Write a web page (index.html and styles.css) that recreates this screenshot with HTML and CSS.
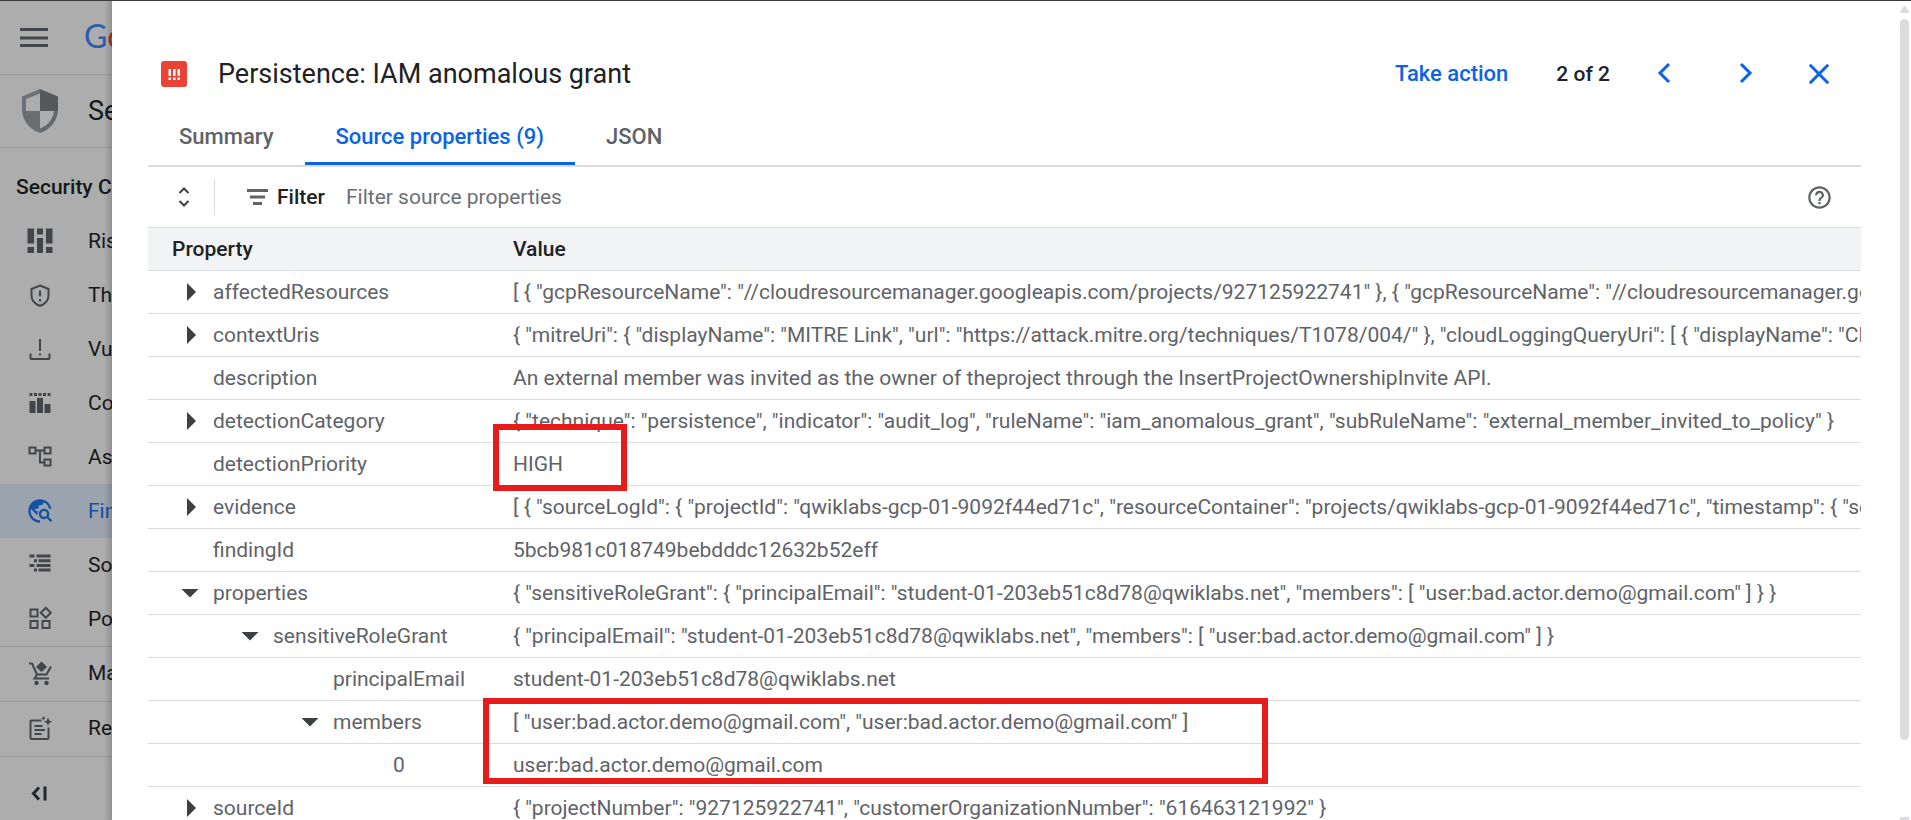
FILE: index.html
```html
<!DOCTYPE html>
<html lang="en">
<head>
<meta charset="utf-8">
<title>Security Command Center</title>
<link rel="stylesheet" href="styles.css">
</head>
<body>
<div class="app">
  <div class="page">
    <header class="topbar">
      <svg class="menu" viewBox="0 0 28 20"><path d="M0 1.500h28M0 10h28M0 17.500h28" stroke-width="3"/></svg>
      <span class="logo"><span class="logo-blue">G</span><span class="logo-red">o</span></span>
    </header>
    <div class="product">
      <svg class="shield" viewBox="0 0 36 44"><path d="M18 0 0 7.500V22h18z" fill="#6c7276"/><path d="M18 0v22h18V7.500z" fill="#54585b"/><path d="M0 22c1 10 8 19 18 22V22z" fill="#686e72"/><path d="M18 22v22c10-3 17-12 18-22z" fill="#65696c"/><path d="M4 10 18 4.500V22H4z" fill="#adadad"/><path d="M18 22v17.500c8-3 13-9.500 14-17.500z" fill="#adadad"/></svg>
      <span class="product-name">Security</span>
    </div>
    <nav class="nav">
      <p class="nav-title">Security Command Center</p>
      <a class="nav-item" href="#risk"><svg viewBox="0 0 28 28"><path d="M1.500 1.500h6.500v15H1.500zM1.500 20h6.500v6H1.500zM11 1.500h6v6h-6zM11 11h6v15h-6zM20 1.500h6.500v15H20zM20 20h6.500v6H20z"/></svg><span>Risk</span></a>
      <a class="nav-item" href="#threats"><svg viewBox="0 0 28 28" class="line"><path d="M14 4.500 22.500 8v6.500c0 5-3.500 8.500-8.500 10.500-5-2-8.500-5.500-8.500-10.500V8z"/><path d="M14 9.500v6M14 18v2.500"/></svg><span>Threats</span></a>
      <a class="nav-item" href="#vulnerabilities"><svg viewBox="0 0 28 28" class="line"><path d="M14 4v12M14 18.500v2M4.500 18.500V23q0 1 1 1h17q1 0 1-1v-4.500"/></svg><span>Vulnerabilities</span></a>
      <a class="nav-item" href="#compliance"><svg viewBox="0 0 28 28"><path d="M3.500 4h3v3h-3zM8 4h3v3H8zM12.500 4h3v3h-3zM17 4h3v3h-3zM21.500 4h3v3h-3zM3.500 12h6v12h-6zM11 9h6v15h-6zM18.500 15h6v9h-6z"/></svg><span>Compliance</span></a>
      <a class="nav-item" href="#assets"><svg viewBox="0 0 28 28" class="line"><path d="M3.500 4.500h6v6h-6zM18.500 4.500h6v6h-6zM18.500 16.500h6v6h-6zM10 7.500h8M14 7.500v12h4"/></svg><span>Assets</span></a>
      <a class="nav-item active" href="#findings"><svg viewBox="0 0 24 24"><path d="M19.300 16.900c.4-.7.7-1.500.7-2.400 0-2.500-2-4.500-4.500-4.500S11 12 11 14.500s2 4.500 4.500 4.500c.9 0 1.700-.3 2.400-.7l3.200 3.200 1.400-1.400zm-3.800.1c-1.400 0-2.500-1.100-2.500-2.500s1.100-2.500 2.500-2.500 2.500 1.100 2.500 2.500-1.100 2.500-2.500 2.500zM12 20v2C6.480 22 2 17.520 2 12S6.480 2 12 2c4.840 0 8.870 3.440 9.800 8h-2.070A8 8 0 0 0 15 4.590V5c0 1.100-.9 2-2 2h-2v2c0 .55-.45 1-1 1H8v2h2v3H9l-4.790-4.790C4.080 10.790 4 11.380 4 12c0 4.410 3.590 8 8 8z"/></svg><span>Findings</span></a>
      <a class="nav-item" href="#sources"><svg viewBox="0 0 28 28"><path d="M3.500 3.500h5v3h-5zM10.500 3.500h14v3h-14zM8 8.300h3v3H8zM12.500 8.300h12v3h-12zM3.500 13h5v3h-5zM10.500 13h14v3h-14zM8 17.600h3v3H8zM12.500 17.600h12v3h-12z"/></svg><span>Sources</span></a>
      <a class="nav-item" href="#posture"><svg viewBox="0 0 28 28" class="line"><path d="M4.500 4.500h7v7h-7zM4.500 16h7v7h-7zM16.500 16h7v7h-7zM19.800 2.800l5 5-5 5-5-5z"/></svg><span>Posture</span></a>
      <a class="nav-item ruled" href="#marketplace"><svg viewBox="0 0 28 28"><path d="M15.500 2.500 21 8l-5.500 5L10 8z"/><path d="M3 4.500h3l5 11h9.500L25 7.500M11 15.500l-2.500 4H23" class="stroke"/><circle cx="10.500" cy="24" r="2.200"/><circle cx="20.500" cy="24" r="2.200"/></svg><span>Marketplace</span></a>
      <a class="nav-item ruled" href="#release-notes"><svg viewBox="0 0 28 28"><path d="M15.500 6.500h-10q-1 0-1 1V24q0 1 1 1h16q1 0 1-1V13.500M8.500 12h8M8.500 16h10.500M8.500 20h7" class="stroke"/><path d="m22 3.500 1.200 3 3 1.200-3 1.200-1.200 3-1.200-3-3-1.200 3-1.200zM17.500 2l.7 1.500 1.500.7-1.500.7-.7 1.500-.7-1.500-1.500-.7 1.500-.7z"/></svg><span>Release Notes</span></a>
      <a class="nav-item ruled collapse" href="#collapse" aria-label="Collapse menu"><svg viewBox="0 0 28 28" class="bold"><path d="M13 8.500 7.500 14.500l5.500 6M19 7.500v14"/></svg></a>
    </nav>
  </div>
  <main class="panel">
    <header class="panel-head">
      <svg class="severity" viewBox="0 0 26 26"><rect width="26" height="26" rx="3" fill="#ea4335"/><path d="M7.500 8h2.500v7H7.500zM12 8h2.500v7H12zM16.500 8H19v7h-2.500zM7.500 16.500h2.500V19H7.500zM12 16.500h2.500V19H12zM16.500 16.500H19V19h-2.500z" fill="#fff"/></svg>
      <h1 class="title">Persistence: IAM anomalous grant</h1>
      <button class="action" type="button">Take action</button>
      <span class="count">2 of 2</span>
      <button class="icon-btn prev" type="button" aria-label="Previous"><svg viewBox="0 0 24 24"><path d="M17 2 8 11l9 9"/></svg></button>
      <button class="icon-btn next" type="button" aria-label="Next"><svg viewBox="0 0 24 24"><path d="m7 2 9 9-9 9"/></svg></button>
      <button class="icon-btn" type="button" aria-label="Close"><svg viewBox="0 0 24 24"><path d="m2.800 2.800 18.400 18.400M21.200 2.800 2.800 21.200"/></svg></button>
    </header>
    <div class="tabs" role="tablist">
      <button class="tab" role="tab" type="button">Summary</button>
      <button class="tab selected" role="tab" type="button" aria-selected="true">Source properties (9)</button>
      <button class="tab" role="tab" type="button">JSON</button>
    </div>
    <div class="toolbar">
      <button class="expand" type="button" aria-label="Expand all"><svg viewBox="0 0 12 20"><path d="m1.500 6 4.500-4.500L10.500 6M1.500 14 6 18.500l4.500-4.500"/></svg></button>
      <label class="filter" for="filter"><svg viewBox="0 0 22 16"><path d="M0 1.500h21M3 8h15M6 14.500h9"/></svg>Filter</label>
      <input class="filter-input" id="filter" type="text" placeholder="Filter source properties">
      <button class="help" type="button" aria-label="Help"><svg viewBox="0 0 24 24"><path d="M11 18h2v-2h-2v2zm1-16C6.480 2 2 6.480 2 12s4.480 10 10 10 10-4.480 10-10S17.520 2 12 2zm0 18c-4.410 0-8-3.590-8-8s3.590-8 8-8 8 3.590 8 8-3.590 8-8 8zm0-14c-2.210 0-4 1.790-4 4h2c0-1.100.9-2 2-2s2 .9 2 2c0 2-3 1.750-3 5h2c0-2.250 3-2.500 3-5 0-2.210-1.790-4-4-4z"/></svg></button>
    </div>
    <table class="props">
      <thead><tr><th class="col-name">Property</th><th>Value</th></tr></thead>
      <tbody>
        <tr><td><div class="key"><button class="caret" type="button" aria-label="Expand"></button>affectedResources</div></td><td>[ { "gcpResourceName": "//cloudresourcemanager.googleapis.com/projects/927125922741" }, { "gcpResourceName": "//cloudresourcemanager.googleapis.com/projects/927125922741" } ]</td></tr>
        <tr><td><div class="key"><button class="caret" type="button" aria-label="Expand"></button>contextUris</div></td><td>{ "mitreUri": { "displayName": "MITRE Link", "url": "https://attack.mitre.org/techniques/T1078/004/" }, "cloudLoggingQueryUri": [ { "displayName": "Cloud Logging Query Link" } ] }</td></tr>
        <tr><td><div class="key leaf">description</div></td><td>An external member was invited as the owner of theproject through the InsertProjectOwnershipInvite API.</td></tr>
        <tr><td><div class="key"><button class="caret" type="button" aria-label="Expand"></button>detectionCategory</div></td><td>{ "technique": "persistence", "indicator": "audit_log", "ruleName": "iam_anomalous_grant", "subRuleName": "external_member_invited_to_policy" }</td></tr>
        <tr><td><div class="key leaf">detectionPriority</div></td><td class="marked">HIGH<span class="mark mark-priority"></span></td></tr>
        <tr><td><div class="key"><button class="caret" type="button" aria-label="Expand"></button>evidence</div></td><td>[ { "sourceLogId": { "projectId": "qwiklabs-gcp-01-9092f44ed71c", "resourceContainer": "projects/qwiklabs-gcp-01-9092f44ed71c", "timestamp": { "seconds": "1690000000" } } } ]</td></tr>
        <tr><td><div class="key leaf">findingId</div></td><td>5bcb981c018749bebdddc12632b52eff</td></tr>
        <tr><td><div class="key"><button class="caret open" type="button" aria-label="Collapse"></button>properties</div></td><td>{ "sensitiveRoleGrant": { "principalEmail": "student-01-203eb51c8d78@qwiklabs.net", "members": [ "user:bad.actor.demo@gmail.com" ] } }</td></tr>
        <tr><td><div class="key depth-1"><button class="caret open" type="button" aria-label="Collapse"></button>sensitiveRoleGrant</div></td><td>{ "principalEmail": "student-01-203eb51c8d78@qwiklabs.net", "members": [ "user:bad.actor.demo@gmail.com" ] }</td></tr>
        <tr><td><div class="key leaf depth-2">principalEmail</div></td><td>student-01-203eb51c8d78@qwiklabs.net</td></tr>
        <tr><td><div class="key depth-2"><button class="caret open" type="button" aria-label="Collapse"></button>members</div></td><td class="marked">[ "user:bad.actor.demo@gmail.com", "user:bad.actor.demo@gmail.com" ]<span class="mark mark-members"></span></td></tr>
        <tr><td><div class="key leaf depth-3">0</div></td><td>user:bad.actor.demo@gmail.com</td></tr>
        <tr><td><div class="key"><button class="caret" type="button" aria-label="Expand"></button>sourceId</div></td><td>{ "projectNumber": "927125922741", "customerOrganizationNumber": "616463121992" }</td></tr>
      </tbody>
    </table>
  </main>
  <div class="scrollbar">
    <svg class="arrow" viewBox="0 0 9 7"><path d="M4.500 0q.8 0 1.300 1L9 6v1H0V6l3.200-5q.5-1 1.300-1z"/></svg>
    <div class="track"><div class="thumb"></div></div>
    <div class="arrow-down"></div>
  </div>
</div>
</body>
</html>
```
FILE: styles.css
```css
* { box-sizing: border-box; }
body {
  margin: 0;
  height: 100vh;
  overflow: hidden;
  background: #fff;
  color: #202124;
  font: 21px/24px Roboto, "Liberation Sans", sans-serif;
}
button { padding: 0; border: 0; background: none; font: inherit; color: inherit; cursor: pointer; }
.app { display: flex; height: 100vh; border-top: 1px solid #3c3a3b; }

.page { position: relative; flex: none; width: 112px; overflow: hidden; background: #adadad; white-space: nowrap; }
.page::after { content: ""; position: absolute; inset: 0 0 0 auto; width: 8px; background: linear-gradient(to right, transparent, rgba(0, 0, 0, 0.16)); }
.topbar { display: flex; align-items: center; gap: 36px; height: 74px; padding-left: 20px; border-bottom: 1px solid #989a9c; }
.menu { flex: none; width: 28px; height: 20px; }
.menu path { stroke: #42464a; }
.logo { padding-bottom: 4px; font: 32px/36px Lato, sans-serif; }
.logo-blue { color: #2d5dae; }
.logo-red { color: #a53229; }
.product { display: flex; align-items: center; gap: 30px; height: 73px; padding-left: 22px; border-bottom: 1px solid #989a9c; }
.shield { flex: none; width: 36px; height: 44px; }
.product-name { font-size: 27px; line-height: 36px; color: #16181a; }
.nav-title { margin: 0; padding: 27px 16px 15px; font-weight: 500; color: #16181a; }
.nav-item { display: flex; align-items: center; gap: 34px; height: 54px; padding-left: 26px; color: #16181a; text-decoration: none; }
.nav-item svg { flex: none; width: 28px; height: 28px; fill: #42464a; }
.nav-item .line, .nav-item .bold, .nav-item .stroke { fill: none; stroke: #42464a; stroke-width: 2; }
.nav-item .bold { stroke: #25282b; stroke-width: 3; }
.active { background: #9ba3af; color: #1450a4; }
.active svg { fill: #1450a4; }
.ruled { height: 55px; padding-bottom: 3px; border-top: 1px solid #989a9c; }
.collapse { height: 76px; }

.panel { flex: 1; min-width: 0; padding: 0 37px 0 36px; overflow: hidden; }
.panel-head { display: flex; align-items: center; height: 96px; margin-top: 25px; padding: 0 30px 0 13px; }
.severity { flex: none; width: 26px; height: 26px; margin-right: 31px; }
.title { flex: 1; margin: 0; font-size: 27px; line-height: 36px; font-weight: 400; }
.action, .icon-btn { color: #0b63e5; }
.action { margin-right: 48px; font-size: 22px; font-weight: 500; }
.count { margin-right: 42px; font-weight: 500; }
.icon-btn { display: flex; }
.icon-btn svg { width: 24px; height: 24px; fill: none; stroke: currentColor; stroke-width: 3; }
.prev { margin-right: 58px; }
.next { margin-right: 49px; }
.tabs { display: flex; height: 45px; border-bottom: 2px solid #dadce0; }
.tab { padding: 0 31px 13px; font-size: 22px; font-weight: 500; color: #5f6368; }
.selected { color: #0b63e5; border-bottom: 3px solid #0b63e5; padding-bottom: 10px; }
.toolbar { display: flex; align-items: center; height: 60px; padding: 0 28px 0 30px; }
.expand { display: flex; width: 37px; height: 36px; align-items: center; border-right: 1px solid #dadce0; }
.expand svg { width: 12px; height: 20px; fill: none; stroke: #3c4043; stroke-width: 2; }
.filter { display: flex; align-items: center; gap: 8px; margin: 0 21px 0 32px; font-weight: 500; }
.filter svg { width: 22px; height: 16px; stroke: #5f6368; stroke-width: 3; }
.filter-input { flex: 1; min-width: 0; padding: 0; border: 0; outline: 0; font: inherit; }
.filter-input::placeholder { color: #6b6f74; opacity: 1; }
.help svg { display: block; width: 27px; height: 27px; fill: #5f6368; }

.props { width: 100%; table-layout: fixed; border-collapse: separate; border-spacing: 0; border-top: 1px solid #dadce0; color: #5f6368; }
.props th { height: 43px; padding: 0; background: #f1f3f4; border-bottom: 1px solid #dadce0; text-align: left; font-weight: 500; color: #202124; }
.props .col-name { width: 365px; padding-left: 24px; }
.props td { height: 43px; padding: 0; overflow: hidden; white-space: nowrap; border-bottom: 1px solid #dadce0; }
.props .marked { position: relative; overflow: visible; }
.key { display: flex; align-items: center; padding-left: 33px; }
.leaf { padding-left: 65px; }
.depth-1 { padding-left: 93px; }
.depth-2 { padding-left: 153px; }
.leaf.depth-2 { padding-left: 185px; }
.leaf.depth-3 { padding-left: 245px; }
.caret { display: grid; place-items: center; width: 18px; height: 18px; margin-right: 14px; }
.caret::before { content: ""; width: 9px; height: 18px; margin-left: 3px; background: #3c4043; clip-path: polygon(0 0, 100% 50%, 0 100%); }
.open::before { width: 18px; height: 9px; margin-left: 0; clip-path: polygon(0 0, 100% 0, 50% 100%); }
.mark { position: absolute; border: 6px solid #e81b1b; pointer-events: none; }
.mark-priority { left: -20px; top: -19px; width: 134px; height: 67px; }
.mark-members { left: -30px; top: -3px; width: 785px; height: 86px; }

.scrollbar { display: flex; flex-direction: column; flex: none; width: 14px; padding: 5px 2px 0 3px; margin-left: -1px; }
.arrow { width: 9px; height: 7px; fill: #dadce0; }
.track { flex: 1; margin: 6px 0; }
.thumb { height: 91%; border-radius: 5px; background: #dadce0; }
.arrow-down { height: 3px; background: #dadce0; }
```
